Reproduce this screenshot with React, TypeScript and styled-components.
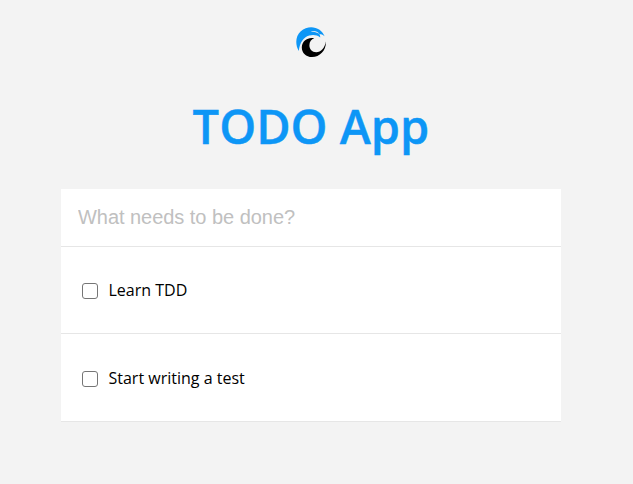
import React from "react";
import styled, { createGlobalStyle } from "styled-components";

const GlobalStyle = createGlobalStyle`
  body {
    margin: 0;
    background: #f3f3f3;
    color: #000;
    font-family: "Open Sans", "Noto Sans", sans-serif;
    -webkit-font-smoothing: antialiased;
  }
`;

const Page = styled.main`
  display: flex;
  flex-direction: column;
  align-items: center;
  box-sizing: border-box;
  min-height: 484px;
  padding: 27px 11px 0 0;
`;

const Logo = styled.svg`
  display: block;
  width: 30px;
  height: 30px;
`;

const Title = styled.h1`
  margin: 37px 0 30px;
  color: #0d96f6;
  font-size: 47px;
  font-weight: 600;
  line-height: 65px;
  -webkit-text-stroke: 0.4px #0d96f6;
`;

const Panel = styled.section`
  width: 500px;
  background: #fff;
`;

const NewTodo = styled.input`
  display: block;
  box-sizing: border-box;
  width: 100%;
  height: 58px;
  padding: 0 17px;
  border: 0;
  border-bottom: 1px solid #e6e6e6;
  outline: 0;
  background: #fff;
  font-family: "Liberation Sans", Arial, sans-serif;
  font-size: 20px;
  letter-spacing: -0.04px;

  &::placeholder {
    color: #c0c0c0;
  }
`;

const TodoList = styled.ul`
  margin: 0;
  padding: 0;
  list-style: none;
`;

const TodoItem = styled.li<{ $height: number }>`
  display: flex;
  align-items: center;
  box-sizing: border-box;
  height: ${({ $height }) => $height}px;
  padding: 0 21px;
  border-bottom: 1px solid #e6e6e6;
`;

const TodoLabel = styled.label`
  display: flex;
  align-items: center;
  gap: 10.5px;
  font-size: 16px;
  line-height: 24px;
`;

const Checkbox = styled.input`
  appearance: none;
  box-sizing: border-box;
  width: 16px;
  height: 16px;
  margin: 2px 0 0;
  border: 1px solid #767676;
  border-radius: 3px;
  background: #fff;

  &:checked {
    background: #0d96f6;
  }
`;

const todos = [
  { text: "Learn TDD", height: 87 },
  { text: "Start writing a test", height: 88 },
];

export default function App() {
  return (
    <>
      <GlobalStyle />
      <Page>
        <Logo viewBox="0 0 30 30" aria-label="Wave logo">
          <path
            fill="#0d96f6"
            d="M2.8 24C-1 18 -.6 9 4.8 4.3C10.2-.7 18-1.2 23.5 2.8C26 4.6 27.5 6.7 28.6 9.3C26.8 7.6 25.2 7 23.4 6.9C24 8 24.3 9.2 24.2 10.4C21 8 17 7.4 13.2 8.6C7.4 10.4 3.8 15.6 2.8 24Z"
          />
          <path
            fill="#f3f3f3"
            d="M14.6 4.5C18.2 3.4 21.8 4.6 23.6 7C20.8 5.3 18 4.4 14.6 4.5Z"
          />
          <path
            fill="#000"
            d="M18.2 11.2C12.2 9.8 6 13.6 5.8 20.2C5.7 25.6 10 30 16 30C24 30 30.2 23.4 30 14.4C28.8 20.6 25 25.2 20.2 25.2C16.1 25.2 13.4 22.2 13.4 18.2C13.4 14.8 15.4 12.2 18.2 11.2Z"
          />
        </Logo>
        <Title>TODO App</Title>
        <Panel>
          <NewTodo placeholder="What needs to be done?" />
          <TodoList>
            {todos.map(({ text, height }) => (
              <TodoItem key={text} $height={height}>
                <TodoLabel>
                  <Checkbox type="checkbox" />
                  {text}
                </TodoLabel>
              </TodoItem>
            ))}
          </TodoList>
        </Panel>
      </Page>
    </>
  );
}
